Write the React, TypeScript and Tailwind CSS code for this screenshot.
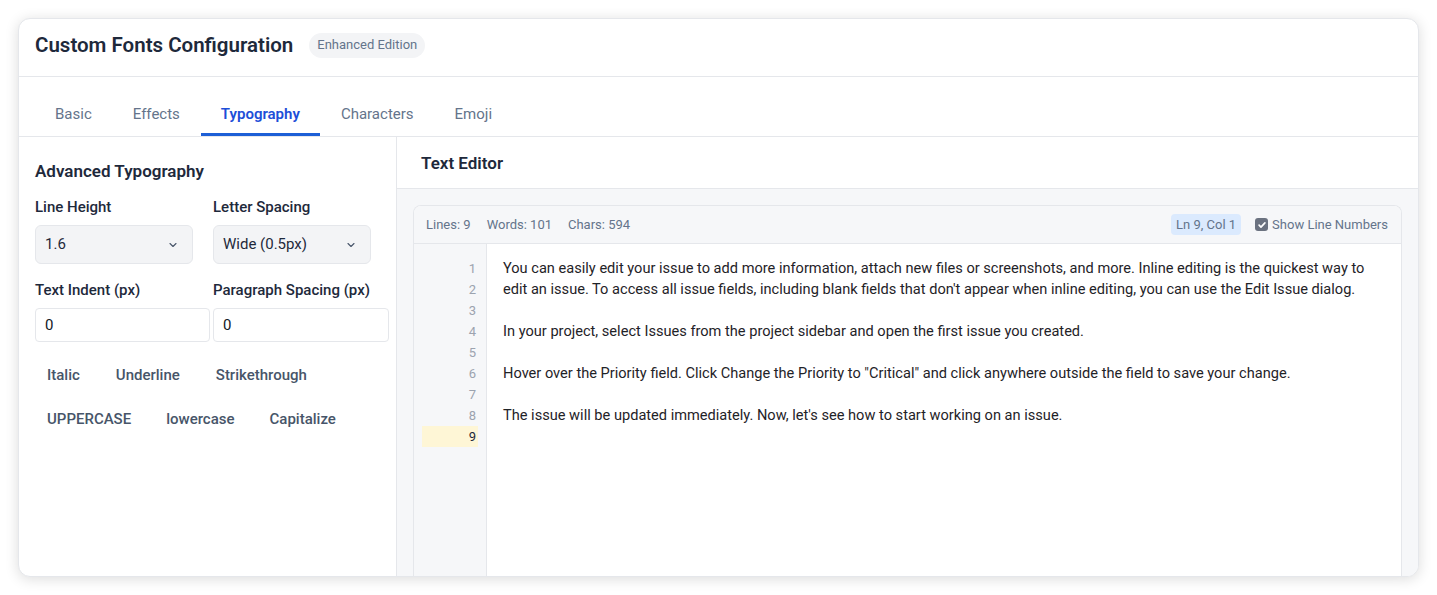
import React from "react";

const lines: string[] = [
  "You can easily edit your issue to add more information, attach new files or screenshots, and more. Inline editing is the quickest way to",
  "edit an issue. To access all issue fields, including blank fields that don't appear when inline editing, you can use the Edit Issue dialog.",
  "",
  "In your project, select Issues from the project sidebar and open the first issue you created.",
  "",
  'Hover over the Priority field. Click Change the Priority to "Critical" and click anywhere outside the field to save your change.',
  "",
  "The issue will be updated immediately. Now, let's see how to start working on an issue.",
  "",
];

function Chevron() {
  return (
    <svg width="12" height="12" viewBox="0 0 24 24" fill="none" stroke="#475569" strokeWidth="2.2" strokeLinecap="round" strokeLinejoin="round">
      <path d="M6 9l6 6 6-6" />
    </svg>
  );
}

function Select({ value }: { value: string }) {
  return (
    <div className="w-[158px] h-[39px] flex items-center justify-between pl-[9px] pr-[13px] bg-[#f3f4f6] border border-[#e5e7eb] rounded-md text-[15px] text-[#1e293b]">
      <span>{value}</span>
      <Chevron />
    </div>
  );
}

export default function App() {
  const tabs = ["Basic", "Effects", "Typography", "Characters", "Emoji"];
  return (
    <div className="w-[1437px] h-[595px] bg-white p-[18px] font-['Roboto','Liberation_Sans',sans-serif]">
      <div className="h-[559px] w-[1401px] rounded-xl bg-white overflow-hidden flex flex-col border border-[#e5e7eb] shadow-[0_2px_14px_rgba(0,0,0,0.14)]">
        {/* header */}
        <div className="h-[58px] shrink-0 flex items-center gap-4 px-4 pb-[5px] border-b border-[#e5e7eb]">
          <h1 className="text-[20.5px] font-semibold text-[#1e293b]">Custom Fonts Configuration</h1>
          <span className="px-2 h-[25px] flex items-center rounded-full bg-[#f3f4f6] text-[13px] text-[#64748b]">Enhanced Edition</span>
        </div>
        {/* tabs */}
        <div className="h-[60px] shrink-0 flex items-end px-4 border-b border-[#e5e7eb]">
          <div className="flex gap-[1px]">
            {tabs.map((t) => (
              <div
                key={t}
                className={
                  t === "Typography"
                    ? "h-[46px] px-5 flex items-center border-b-[3px] border-[#1d5fd6] text-[#1d4ed8] font-semibold text-[15px] pt-[5px]"
                    : "h-[46px] px-5 flex items-center border-b-[3px] border-transparent text-[#64748b] text-[15px] pt-[5px]"
                }
              >
                {t}
              </div>
            ))}
          </div>
        </div>
        {/* body */}
        <div className="flex-1 flex min-h-0">
          {/* left */}
          <div className="w-[378px] shrink-0 border-r border-[#e5e7eb] px-4 pt-[22px] overflow-hidden">
            <h2 className="text-[17px] font-semibold text-[#1e293b] leading-[24px] mb-[14px]">Advanced Typography</h2>
            <div className="grid grid-cols-[175px_176px] gap-x-[3px]">
              <div>
                <div className="text-[15px] font-medium text-[#1e293b] leading-[20px] mb-[8px]">Line Height</div>
                <Select value="1.6" />
              </div>
              <div>
                <div className="text-[15px] font-medium text-[#1e293b] leading-[20px] mb-[8px]">Letter Spacing</div>
                <Select value="Wide (0.5px)" />
              </div>
              <div className="mt-[16px]">
                <div className="text-[15px] font-medium text-[#1e293b] leading-[20px] mb-[8px]">Text Indent (px)</div>
                <div className="h-[34px] w-full flex items-center px-[9px] border border-[#e5e7eb] rounded-[4px] text-[15px] text-[#111827]">0</div>
              </div>
              <div className="mt-[16px]">
                <div className="text-[15px] font-medium text-[#1e293b] leading-[20px] mb-[8px]">Paragraph Spacing (px)</div>
                <div className="h-[34px] w-full flex items-center px-[9px] border border-[#e5e7eb] rounded-[4px] text-[15px] text-[#111827]">0</div>
              </div>
            </div>
            <div className="mt-[17px] flex flex-col gap-[12px]">
              <div className="flex gap-[12px]">
                {["Italic", "Underline", "Strikethrough"].map((b) => (
                  <div key={b} className="h-[32px] px-3 flex items-center text-[15px] font-medium text-[#475569]">{b}</div>
                ))}
              </div>
              <div className="flex gap-[11px]">
                {["UPPERCASE", "lowercase", "Capitalize"].map((b) => (
                  <div key={b} className="h-[32px] px-3 flex items-center text-[15px] font-medium text-[#475569]">{b}</div>
                ))}
              </div>
            </div>
          </div>
          {/* right */}
          <div className="flex-1 flex flex-col min-w-0 bg-[#f6f7f9]">
            <div className="h-[52px] shrink-0 bg-white border-b border-[#e5e7eb] flex items-center px-6 pt-[2px]">
              <h2 className="text-[17px] font-semibold text-[#1e293b]">Text Editor</h2>
            </div>
            <div className="flex-1 px-4 pt-4 min-h-0">
              <div className="h-full flex flex-col rounded-t-lg border border-b-0 border-[#e5e7eb] bg-white overflow-hidden">
                <div className="h-[38px] shrink-0 flex items-center justify-between pl-3 pr-[13px] bg-[#f6f7f9] border-b border-[#e5e7eb] text-[13px] text-[#64748b]">
                  <div className="flex gap-4">
                    <span>Lines: 9</span>
                    <span>Words: 101</span>
                    <span>Chars: 594</span>
                  </div>
                  <div className="flex items-center gap-[14px]">
                    <span className="px-[5px] h-[21px] flex items-center rounded bg-[#dbeafe] text-[#64748b]">Ln 9, Col 1</span>
                    <label className="flex items-center gap-[4px]">
                      <span className="w-[13px] h-[13px] rounded-[3px] bg-[#6b7280] flex items-center justify-center">
                        <svg width="10" height="10" viewBox="0 0 24 24" fill="none" stroke="white" strokeWidth="4" strokeLinecap="round" strokeLinejoin="round">
                          <path d="M5 12.5l4.5 4.5L19 7" />
                        </svg>
                      </span>
                      <span>Show Line Numbers</span>
                    </label>
                  </div>
                </div>
                <div className="flex-1 flex min-h-0">
                  <div className="w-[73px] shrink-0 bg-[#f6f7f9] border-r border-[#e5e7eb] pt-[14px] px-2">
                    {lines.map((_, i) => (
                      <div
                        key={i}
                        className={
                          i === 8
                            ? "h-[21px] leading-[21px] text-right pr-[2px] text-[13px] bg-[#fef6d6] text-[#1e293b]"
                            : "h-[21px] leading-[21px] text-right pr-[2px] text-[13px] text-[#9ca3af]"
                        }
                      >
                        {i + 1}
                      </div>
                    ))}
                  </div>
                  <div className="flex-1 pl-4 pt-[14px] text-[14.6px] leading-[21px] text-[#1f2328] whitespace-pre">
                    {lines.map((l, i) => (
                      <div key={i} className="h-[21px]">{l}</div>
                    ))}
                  </div>
                </div>
              </div>
            </div>
          </div>
        </div>
      </div>
    </div>
  );
}
